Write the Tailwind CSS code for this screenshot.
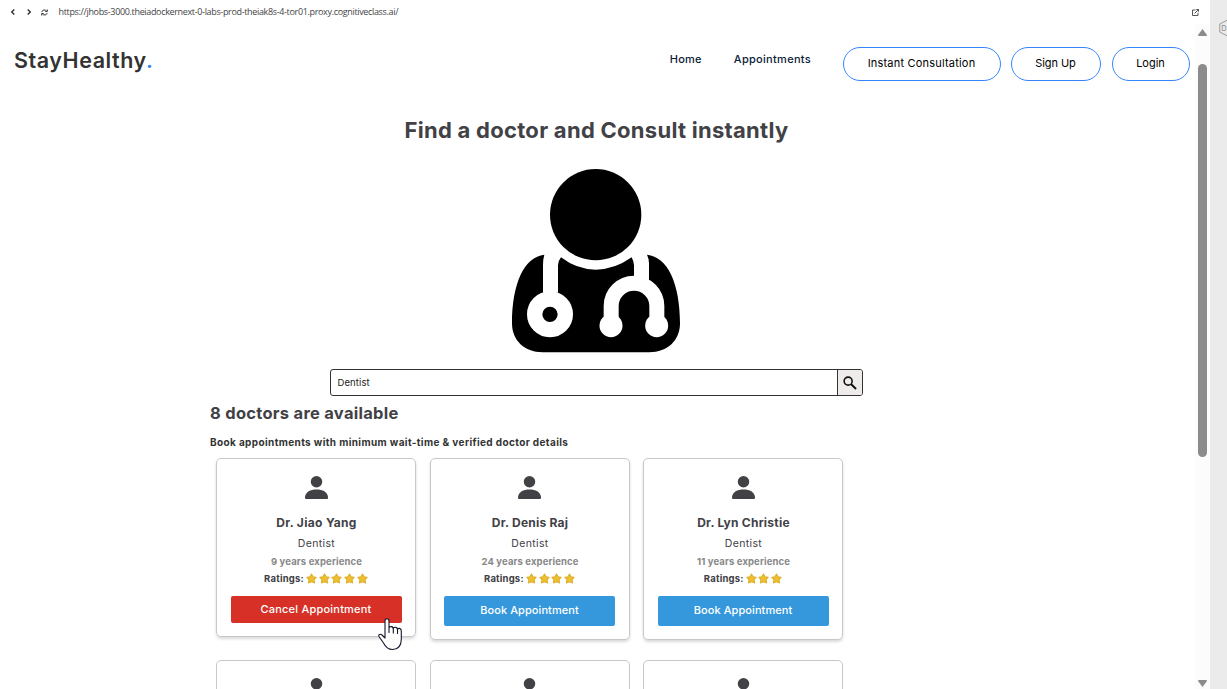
<!DOCTYPE html>
<html lang="en">
<head>
<meta charset="utf-8">
<title>StayHealthy</title>
<script src="https://cdn.jsdelivr.net/npm/@tailwindcss/browser@4"></script>
</head>
<body class="flex h-[689px] w-[1227px] overflow-hidden bg-white font-['Inter',sans-serif] text-[#414146]">
<svg class="hidden">
  <symbol id="user" viewBox="0 0 24 24"><circle cx="12" cy="6" r="6"/><path d="M0 22C.6 16.500 5.500 14 12 14S23.400 16.500 24 22V23Q24 24 23 24H1Q0 24 0 23Z"/></symbol>
  <symbol id="star" viewBox="0 0 12 12"><path d="M6 1.200 7.700 4.200 11 4.800 8.800 7.300 9.400 10.800 6 9.500 2.600 10.800 3.200 7.300 1 4.800 4.300 4.200Z" fill="#edc02e" stroke="#e0b030" stroke-width="1.200" stroke-linejoin="round"/></symbol>
</svg>
<div class="flex w-[1210px] flex-col">
  <div class="flex h-6 shrink-0 items-center pl-[10px] pr-[11px] text-[#333]">
    <svg class="size-[6px]" viewBox="0 0 6 6" fill="none" stroke="currentColor" stroke-width="1.400"><path d="M4.300.5 1.700 3 4.300 5.500"/></svg>
    <svg class="ml-[10px] size-[6px]" viewBox="0 0 6 6" fill="none" stroke="currentColor" stroke-width="1.400"><path d="M1.700.5 4.300 3 1.700 5.500"/></svg>
    <svg class="ml-[9px] size-[7px]" viewBox="0 0 7 7" fill="none" stroke="currentColor"><path d="M.8 3C1.200.7 4.300.4 5.500 1.900M6.200 4C5.800 6.300 2.700 6.600 1.500 5.100M6.300.5V2.500H4.300M.7 6.500V4.500H2.700"/></svg>
    <span class="ml-[10.500px] whitespace-nowrap font-['Open_Sans',sans-serif] text-[9px] tracking-[-0.340px] text-[#444]">https://jhobs-3000.theiadockernext-0-labs-prod-theiak8s-4-tor01.proxy.cognitiveclass.ai/</span>
    <svg class="ml-auto size-[7px]" viewBox="0 0 7 7" fill="none" stroke="#444" stroke-width=".9"><path d="M3.500 1H.5V6.500H6V3.800M2.500 4.500 6.500.5M4.300.5H6.500V2.700"/></svg>
  </div>
  <div class="flex min-h-0 flex-1">
    <div class="w-[1195px]">
      <header class="flex h-[76px] items-start pl-[14px] pr-[5.500px] text-black">
        <div class="mt-[20px] whitespace-nowrap text-[21.500px] leading-8 font-semibold tracking-[0.550px] text-[#333]">StayHealthy<span class="text-[#3685fb]">.</span></div>
        <nav class="ml-auto flex items-start text-[11px] leading-4">
          <a class="mt-[27px] mr-8 font-medium tracking-[0.250px] text-[#0b2038]">Home</a>
          <a class="mt-[27px] mr-[31.500px] font-medium tracking-[0.300px] text-[#0b2038]">Appointments</a>
          <button class="mt-[23px] mr-[10px] h-[34px] w-[158px] rounded-full border border-[#3685fb] pb-[2px] tracking-[0.200px]">Instant Consultation</button>
          <button class="mt-[23px] mr-[11px] h-[34px] w-[90px] rounded-full border border-[#3685fb] pb-[2px] tracking-[-0.050px]">Sign Up</button>
          <button class="mt-[23px] h-[34px] w-[78px] rounded-full border border-[#3685fb] pb-[2px]">Login</button>
        </nav>
      </header>
      <main>
        <div class="flex flex-col items-center pr-[2px]">
          <h1 class="mt-[14px] text-[22px] leading-8 font-bold tracking-[0.280px]">Find a doctor and Consult instantly</h1>
          <svg class="mt-[22px] mr-px h-[186px] w-[170px]" viewBox="35 24 510 558">
            <circle cx="289" cy="164" r="137"/>
            <path d="M135 284C75 290 38 370 38 490C38 541 75 577 130 577H450C505 577 542 541 542 490C542 370 505 290 443 284Q449 296 449 310V360L404 348V316Q403 303 397 292Q345 329 289 329T185 292Q176 303 176 316V398L131 398V316Q131 297 135 284Z"/>
            <circle cx="152" cy="463" r="46" fill="none" stroke="#fff" stroke-width="46"/>
            <path d="M335.500 497V438a68.500 68.500 0 0 1 137 0V497" fill="none" stroke="#fff" stroke-width="45"/>
            <circle cx="335" cy="497" r="34.500" fill="#fff"/><circle cx="472" cy="497" r="34.500" fill="#fff"/>
          </svg>
          <div class="mt-[15px] flex h-[27px] w-[533px] overflow-hidden rounded-[3px] border border-[#333]">
            <div class="flex flex-1 items-center pt-px pl-[6.500px] text-[9.500px] tracking-[0.100px] text-[#222]">Dentist</div>
            <div class="flex w-[25px] items-center justify-center border-l border-[#333] bg-[#efebeb]">
              <svg class="size-[14px]" viewBox="0 0 15 15" fill="none" stroke="#111" stroke-width="1.700"><circle cx="5.500" cy="5.500" r="4.300"/><path d="M8.500 8.500 14 14" stroke-width="2.100"/></svg>
            </div>
          </div>
        </div>
        <section class="pl-[210px]">
          <h2 class="mt-[5px] text-[16.500px] leading-6 font-bold tracking-[0.280px]">8 doctors are available</h2>
          <h3 class="mt-[9px] text-[10px] leading-4 font-bold tracking-[0.375px] text-[#333]">Book appointments with minimum wait-time &amp; verified doctor details</h3>
          <div class="mt-[8px] ml-[6px] grid grid-cols-[200px_200px_200px] items-start gap-x-[13.500px] gap-y-5">
            <article class="flex h-[179px] flex-col items-center rounded-[5px] border border-[#c8c8c8] px-[13.500px] pt-[17px] shadow-[0_2px_3px_rgba(0,0,0,0.150)]">
              <svg class="size-[23px]" fill="#414146"><use href="#user"/></svg>
              <div class="mt-[16px] pl-px text-[12px] leading-4 font-bold tracking-[0.330px]">Dr. Jiao Yang</div>
              <div class="mt-[5px] pl-px text-[10.500px] leading-4 tracking-[0.350px]">Dentist</div>
              <div class="mt-[2px] pl-px text-[9.500px] leading-4 font-bold tracking-[0.140px] text-[#888]">9 years experience</div>
              <div class="mt-px flex items-center text-[9.500px] leading-4 font-bold tracking-[0.200px]">Ratings:
                <span class="mb-px ml-[2px] flex gap-[1.750px]"><svg class="size-[11px]"><use href="#star"/></svg><svg class="size-[11px]"><use href="#star"/></svg><svg class="size-[11px]"><use href="#star"/></svg><svg class="size-[11px]"><use href="#star"/></svg><svg class="size-[11px]"><use href="#star"/></svg></span></div>
              <button class="mt-[9px] h-[27px] w-full rounded-[2px] bg-[#d63027] pb-px text-[11px] leading-4 font-medium tracking-[0.220px] text-white">Cancel Appointment</button>
            </article>
            <article class="flex h-[182px] flex-col items-center rounded-[5px] border border-[#c8c8c8] px-[13.500px] pt-[17px] shadow-[0_2px_3px_rgba(0,0,0,0.150)]">
              <svg class="size-[23px]" fill="#414146"><use href="#user"/></svg>
              <div class="mt-[16px] pl-px text-[12px] leading-4 font-bold tracking-[0.230px]">Dr. Denis Raj</div>
              <div class="mt-[5px] pl-px text-[10.500px] leading-4 tracking-[0.350px]">Dentist</div>
              <div class="mt-[2px] pl-px text-[9.500px] leading-4 font-bold tracking-[0.120px] text-[#888]">24 years experience</div>
              <div class="mt-px flex items-center text-[9.500px] leading-4 font-bold tracking-[0.200px]">Ratings:
                <span class="mb-px ml-[2px] flex gap-[1.750px]"><svg class="size-[11px]"><use href="#star"/></svg><svg class="size-[11px]"><use href="#star"/></svg><svg class="size-[11px]"><use href="#star"/></svg><svg class="size-[11px]"><use href="#star"/></svg></span></div>
              <button class="mt-[9px] h-[30px] w-full rounded-[2px] bg-[#3598dc] pb-[2px] text-[11px] leading-4 font-medium tracking-[0.080px] text-white">Book Appointment</button>
            </article>
            <article class="flex h-[182px] flex-col items-center rounded-[5px] border border-[#c8c8c8] px-[13.500px] pt-[17px] shadow-[0_2px_3px_rgba(0,0,0,0.150)]">
              <svg class="size-[23px]" fill="#414146"><use href="#user"/></svg>
              <div class="mt-[16px] pl-px text-[12px] leading-4 font-bold tracking-[0.230px]">Dr. Lyn Christie</div>
              <div class="mt-[5px] pl-px text-[10.500px] leading-4 tracking-[0.350px]">Dentist</div>
              <div class="mt-[2px] pl-px text-[9.500px] leading-4 font-bold tracking-[0.120px] text-[#888]">11 years experience</div>
              <div class="mt-px flex items-center text-[9.500px] leading-4 font-bold tracking-[0.200px]">Ratings:
                <span class="mb-px ml-[2px] flex gap-[1.750px]"><svg class="size-[11px]"><use href="#star"/></svg><svg class="size-[11px]"><use href="#star"/></svg><svg class="size-[11px]"><use href="#star"/></svg></span></div>
              <button class="mt-[9px] h-[30px] w-full rounded-[2px] bg-[#3598dc] pb-[2px] text-[11px] leading-4 font-medium tracking-[0.080px] text-white">Book Appointment</button>
            </article>
            <article class="flex h-[182px] justify-center rounded-[5px] border border-[#c8c8c8] pt-[17px]"><svg class="size-[23px]" fill="#414146"><use href="#user"/></svg></article>
            <article class="flex h-[182px] justify-center rounded-[5px] border border-[#c8c8c8] pt-[17px]"><svg class="size-[23px]" fill="#414146"><use href="#user"/></svg></article>
            <article class="flex h-[182px] justify-center rounded-[5px] border border-[#c8c8c8] pt-[17px]"><svg class="size-[23px]" fill="#414146"><use href="#user"/></svg></article>
          </div>
        </section>
      </main>
    </div>
    <div class="flex w-[15px] flex-col items-center bg-[#fcfcfc]">
      <svg class="mt-[5px] h-[7px] w-[9px] shrink-0" viewBox="0 0 9 7" fill="#8b8b8b"><path d="M4.500 0 9 6Q9 7 8 7H1Q0 7 0 6Z"/></svg>
      <div class="mt-[28px] h-[393px] w-[9px] shrink-0 rounded-full bg-[#8b8b8b]"></div>
      <svg class="mt-auto mb-[2px] h-[7px] w-[9px] shrink-0" viewBox="0 0 9 7" fill="#8b8b8b"><path d="M4.500 7 9 1Q9 0 8 0H1Q0 0 0 1Z"/></svg>
    </div>
  </div>
</div>
<aside class="w-[17px] overflow-hidden bg-[#ebebeb] pt-[19px] pl-[9px]">
  <svg class="h-[18px] w-[17px]" viewBox="0 0 17 18" fill="none" stroke="#999"><path d="M8.500 1 16 5V13L8.500 17 .8 13V5Z"/><text x="2.200" y="12" font-size="7.500" fill="#888" stroke="none">D.</text></svg>
</aside>
<svg class="absolute top-[618px] left-[377px] h-[33px] w-[26px]" viewBox="0 0 26 33" fill="#fff" stroke="#14142a" stroke-width="1.100" stroke-linejoin="round" stroke-linecap="round"><path d="M8 20V3Q8 .8 10 .8T12 3V11Q12 8.300 14.300 8.600T16.300 11.500Q16.300 9 18.500 9.200T20.500 12Q20.700 10 22.500 10.400T24.300 13V21C24.300 28 21 31.500 15.500 31.500 10.500 31.500 8.500 29 6.500 25L2 18.500C.8 16.500 3.500 15.500 5 17ZM12 11V14.500M16.300 11.500V15M20.500 12V15.500"/></svg>
</body>
</html>
